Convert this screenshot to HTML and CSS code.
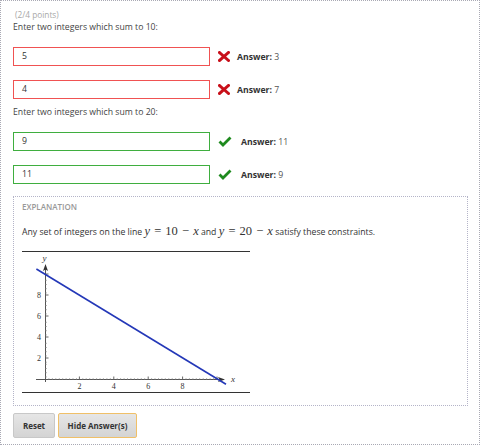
FILE: index.html
```html
<!DOCTYPE html>
<html>
<head>
<meta charset="utf-8">
<link rel="stylesheet" href="styles.css">
</head>
<body>
<div class="frame">
  <div class="points">(2/4 points)</div>
  <div class="prompt">Enter two integers which sum to 10:</div>
  <div class="row first">
    <div class="field wrong">5</div>
    <svg class="mark" width="12" height="11" viewBox="0 0 12 11"><path d="M1.5 1.5 L10.5 9.5 M10.5 1.5 L1.5 9.5" stroke="#c8101a" stroke-width="3" stroke-linecap="square"/></svg>
    <div class="answer"><b>Answer:</b> 3</div>
  </div>
  <div class="row">
    <div class="field wrong">4</div>
    <svg class="mark" width="12" height="11" viewBox="0 0 12 11"><path d="M1.5 1.5 L10.5 9.5 M10.5 1.5 L1.5 9.5" stroke="#c8101a" stroke-width="3" stroke-linecap="square"/></svg>
    <div class="answer"><b>Answer:</b> 7</div>
  </div>
  <div class="prompt second">Enter two integers which sum to 20:</div>
  <div class="row first">
    <div class="field right">9</div>
    <svg class="mark ok" width="14" height="11" viewBox="0 0 14 11"><path d="M1.5 5.5 L5 9 L12.5 1.5" fill="none" stroke="#1e8a1e" stroke-width="2.8"/></svg>
    <div class="answer"><b>Answer:</b> 11</div>
  </div>
  <div class="row">
    <div class="field right">11</div>
    <svg class="mark ok" width="14" height="11" viewBox="0 0 14 11"><path d="M1.5 5.5 L5 9 L12.5 1.5" fill="none" stroke="#1e8a1e" stroke-width="2.8"/></svg>
    <div class="answer"><b>Answer:</b> 9</div>
  </div>
  <div class="explain">
    <div class="ex-title">EXPLANATION</div>
    <div class="ex-text">Any set of integers on the line <span class="math"><i>y</i> = 10 − <i>x</i></span> and <span class="math"><i>y</i> = 20 − <i>x</i></span> satisfy these constraints.</div>
    <svg class="graph" width="228" height="143" viewBox="0 0 228 143">
      <line x1="0" y1="0.5" x2="228" y2="0.5" stroke="#333" stroke-width="1"/>
      <line x1="0" y1="141.5" x2="228" y2="141.5" stroke="#333" stroke-width="1"/>
      <g stroke="#555" stroke-width="1">
        <line x1="14" y1="128.5" x2="199" y2="128.5"/>
        <line x1="23.5" y1="131" x2="23.5" y2="16"/>
      </g>
      <path d="M203 128.5 L196 126 L197.5 128.5 L196 131 Z" fill="#333"/>
      <path d="M23.5 13 L21 20 L23.5 18.5 L26 20 Z" fill="#333"/>
      <g stroke="#666" stroke-width="1">
        <path d="M57.4 125.5 V128.5 M91.8 125.5 V128.5 M126.2 125.5 V128.5 M160.6 125.5 V128.5 M195 125.5 V128.5"/>
        <path d="M23.5 107 H26.5 M23.5 86 H26.5 M23.5 65 H26.5 M23.5 44 H26.5 M23.5 23 H26.5"/>
      </g>
      <g stroke="#999" stroke-width="0.7">
        <path d="M26.9 127 V128.5 M30.4 127 V128.5 M33.8 127 V128.5 M37.3 127 V128.5 M40.7 127 V128.5 M44.1 127 V128.5 M47.6 127 V128.5 M51 127 V128.5 M54.5 127 V128.5 M60.8 127 V128.5 M64.2 127 V128.5 M67.7 127 V128.5 M71.1 127 V128.5 M74.6 127 V128.5 M78 127 V128.5 M81.4 127 V128.5 M84.9 127 V128.5 M88.3 127 V128.5 M95.2 127 V128.5 M98.6 127 V128.5 M102.1 127 V128.5 M105.5 127 V128.5 M108.9 127 V128.5 M112.4 127 V128.5 M115.8 127 V128.5 M119.3 127 V128.5 M122.7 127 V128.5 M129.6 127 V128.5 M133 127 V128.5 M136.5 127 V128.5 M139.9 127 V128.5 M143.3 127 V128.5 M146.8 127 V128.5 M150.2 127 V128.5 M153.7 127 V128.5 M157.1 127 V128.5 M164 127 V128.5 M167.4 127 V128.5 M170.9 127 V128.5 M174.3 127 V128.5 M177.7 127 V128.5 M181.2 127 V128.5 M184.6 127 V128.5 M188.1 127 V128.5 M191.5 127 V128.5"/>
        <path d="M23.5 125.9 H25 M23.5 121.7 H25 M23.5 117.5 H25 M23.5 113.3 H25 M23.5 111.2 H25 M23.5 104.9 H25 M23.5 100.7 H25 M23.5 96.5 H25 M23.5 92.3 H25 M23.5 83.9 H25 M23.5 79.7 H25 M23.5 75.5 H25 M23.5 71.3 H25 M23.5 62.9 H25 M23.5 58.7 H25 M23.5 54.5 H25 M23.5 50.3 H25 M23.5 41.9 H25 M23.5 37.7 H25 M23.5 33.5 H25 M23.5 29.3 H25"/>
      </g>
      <g class="ticklbl" font-size="8" fill="#333">
        <text x="55.4" y="138">2</text>
        <text x="89.8" y="138">4</text>
        <text x="124.2" y="138">6</text>
        <text x="158.6" y="138">8</text>
        <text x="15" y="110">2</text>
        <text x="15" y="89">4</text>
        <text x="15" y="68">6</text>
        <text x="15" y="47">8</text>
        <text x="20.5" y="10" class="var">y</text>
        <text x="209" y="131" class="var">x</text>
      </g>
      <line x1="14.4" y1="18" x2="204" y2="133.3" stroke="#2438b8" stroke-width="1.6"/>
    </svg>
  </div>
  <div class="buttons">
    <button class="btn reset">Reset</button>
    <button class="btn hide">Hide Answer(s)</button>
  </div>
</div>
</body>
</html>
```
FILE: styles.css
```css
html, body {
  margin: 0;
  padding: 0;
  background: #fff;
}
.frame {
  box-sizing: border-box;
  width: 480px;
  height: 445px;
  border: 1px dotted #a9a9b4;
  padding: 7px 12px 0 12px;
  font-family: "Open Sans", sans-serif;
  font-size: 8.7px;
  color: #333;
}
.points {
  line-height: 13px;
  padding-left: 2px;
  color: #a8a8a8;
  font-size: 8.3px;
}
.prompt {
  line-height: 13px;
  color: #444;
}
.prompt.second {
  margin-top: 7px;
}
.row {
  display: flex;
  align-items: center;
  height: 19px;
  margin-top: 14px;
}
.row.first {
  margin-top: 13px;
}
.field {
  box-sizing: border-box;
  width: 197px;
  height: 19px;
  line-height: 17px;
  padding-left: 8px;
  border: 1px solid #999;
  color: #333;
}
.field.wrong {
  border-color: #f05252;
}
.field.right {
  border-color: #3fae3f;
}
.mark {
  margin-left: 8px;
  display: block;
}
.answer {
  margin-left: 7px;
  color: #555;
}
.mark.ok + .answer {
  margin-left: 9px;
}
.answer b {
  color: #333;
}
.explain {
  box-sizing: border-box;
  margin-top: 12px;
  width: 455px;
  height: 210px;
  border: 1px dotted #b4b4c8;
  padding: 4px 8px 0 8px;
}
.ex-title {
  line-height: 11px;
  font-size: 8px;
  font-weight: 600;
  color: #999;
}
.ex-text {
  margin-top: 13px;
  line-height: 13px;
  color: #333;
}
.math {
  font-family: "Liberation Serif", serif;
  font-size: 12.5px;
  word-spacing: 1px;
}
.math i {
  font-style: italic;
}
.graph {
  display: block;
  margin-top: 12px;
}
.ticklbl {
  font-family: "Liberation Serif", serif;
}
.ticklbl .var {
  font-style: italic;
  font-size: 9px;
}
.buttons {
  display: flex;
  gap: 3px;
  margin-top: 7px;
}
.btn {
  box-sizing: border-box;
  height: 25px;
  font-family: "Open Sans", sans-serif;
  font-size: 8px;
  font-weight: 700;
  color: #333;
  background: linear-gradient(#e6e6e6, #d4d4d4);
  border: 1px solid #c8c8c8;
  border-radius: 2px;
  padding: 0;
}
.btn.reset {
  width: 42px;
}
.btn.hide {
  width: 79px;
  border-color: #f0c068;
}
```
